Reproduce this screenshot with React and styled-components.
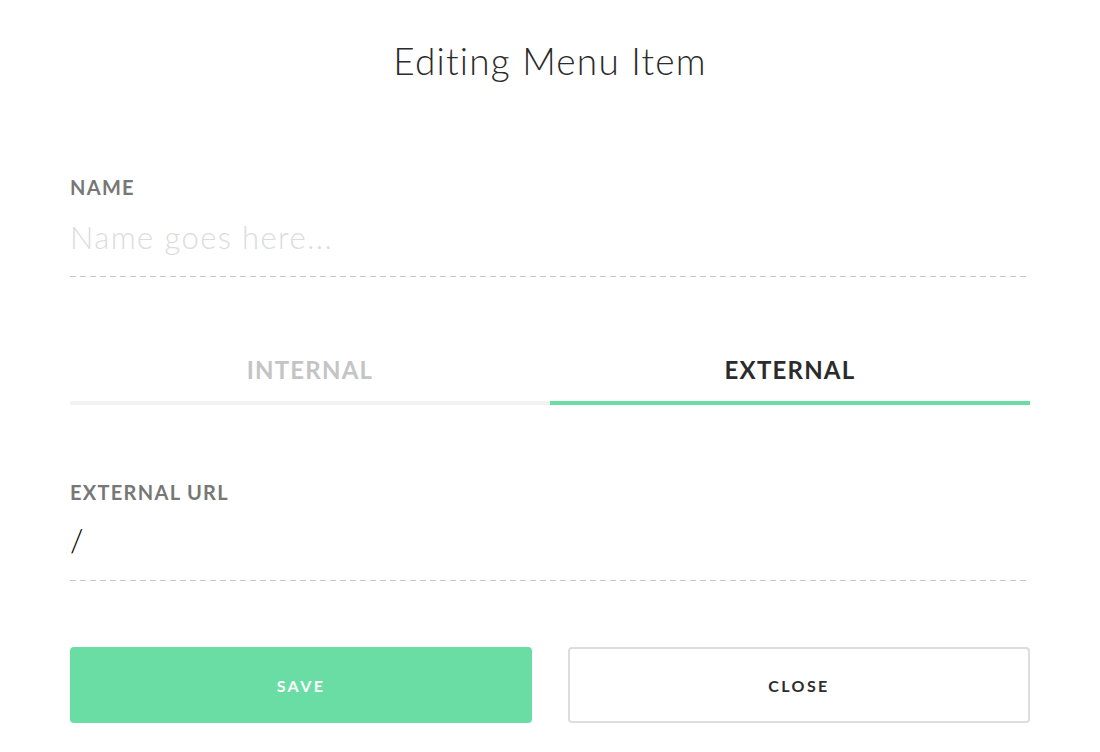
import React, { useState } from 'react';
import styled, { createGlobalStyle } from 'styled-components';

const GlobalStyle = createGlobalStyle`
  body {
    margin: 0;
    background: #ffffff;
    font-family: Lato, 'Open Sans', sans-serif;
  }
`;

const palette = {
  green: '#6adda5',
  label: '#777777',
  dash: '#c8c8c8',
  text: '#2b2b2b',
  muted: '#c4c4c4',
  track: '#f2f2f2',
};

const Modal = styled.div`
  width: 960px;
  margin: 0 auto;
  padding-top: 38px;
  display: flex;
  flex-direction: column;
`;

const Title = styled.h1`
  margin: 0;
  text-align: center;
  font-family: Lato, sans-serif;
  font-weight: 300;
  font-size: 37px;
  line-height: 46px;
  color: ${palette.text};
  letter-spacing: 1.2px;
`;

const Field = styled.div`
  display: flex;
  flex-direction: column;
  margin-top: ${(p) => p.top}px;
`;

const Label = styled.label`
  font-family: Lato, sans-serif;
  font-weight: 700;
  font-size: 20px;
  line-height: 22px;
  letter-spacing: 1.3px;
  color: ${palette.label};
`;

const Input = styled.input`
  border: none;
  outline: none;
  padding: 0 0 ${(p) => p.gap}px;
  margin-top: ${(p) => p.top}px;
  height: 38px;
  box-sizing: content-box;
  font-family: Lato, sans-serif;
  font-weight: 300;
  font-size: 31px;
  letter-spacing: 1.4px;
  color: #000000;
  background:
    repeating-linear-gradient(
      to right,
      ${palette.dash} 0 6px,
      transparent 6px 10px
    )
    bottom left / 100% 1px no-repeat;

  &::placeholder {
    color: #dcdcdc;
  }
`;

const Tabs = styled.div`
  display: grid;
  grid-template-columns: 1fr 1fr;
  margin-top: 77px;
`;

const Tab = styled.button`
  border: none;
  background: none;
  padding: 0 0 15px;
  font-family: Lato, sans-serif;
  font-weight: 700;
  font-size: 24px;
  line-height: 32px;
  letter-spacing: 1.2px;
  color: ${(p) => (p.active ? palette.text : palette.muted)};
  border-bottom: 4px solid ${(p) => (p.active ? palette.green : palette.track)};
  cursor: pointer;
`;

const Buttons = styled.div`
  display: grid;
  grid-template-columns: 1fr 1fr;
  gap: 36px;
  margin-top: 66px;
`;

const Button = styled.button`
  height: 76px;
  border-radius: 4px;
  font-family: Lato, sans-serif;
  font-weight: 700;
  font-size: 16px;
  letter-spacing: 2.4px;
  cursor: pointer;
  box-sizing: border-box;
  background: ${(p) => (p.primary ? palette.green : '#ffffff')};
  color: ${(p) => (p.primary ? '#ffffff' : palette.text)};
  border: ${(p) => (p.primary ? 'none' : '2px solid #dddddd')};
`;

const App = () => {
  const [tab, setTab] = useState('external');
  const [url, setUrl] = useState('/');

  return (
    <Modal>
      <GlobalStyle />
      <Title>Editing Menu Item</Title>
      <Field top={92}>
        <Label>NAME</Label>
        <Input top={20} gap={21} placeholder="Name goes here..." />
      </Field>
      <Tabs>
        <Tab active={tab === 'internal'} onClick={() => setTab('internal')}>
          INTERNAL
        </Tab>
        <Tab active={tab === 'external'} onClick={() => setTab('external')}>
          EXTERNAL
        </Tab>
      </Tabs>
      <Field top={76}>
        <Label>EXTERNAL URL</Label>
        <Input
          top={18}
          gap={22}
          value={url}
          onChange={(e) => setUrl(e.target.value)}
        />
      </Field>
      <Buttons>
        <Button primary>SAVE</Button>
        <Button>CLOSE</Button>
      </Buttons>
    </Modal>
  );
};

export default App;
